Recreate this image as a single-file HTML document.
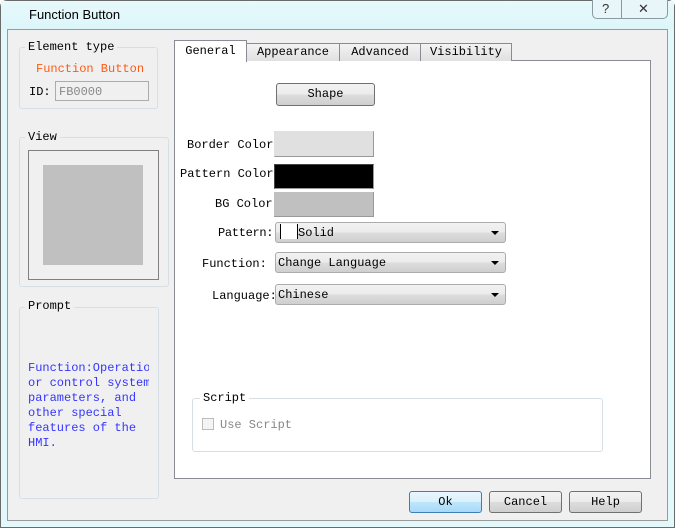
<!DOCTYPE html>
<html><head><style>
*{box-sizing:border-box;margin:0;padding:0}
body{width:675px;height:528px;background:#fff;font-family:"Liberation Mono",monospace;font-size:12px;position:relative;overflow:hidden}
.a{position:absolute}
.m{font-family:"Liberation Mono","Noto Sans CJK SC",monospace;font-size:12px;white-space:nowrap}
.btn{position:absolute;border:1px solid #707070;border-radius:3px;background:linear-gradient(#f2f2f2,#ebebeb 50%,#dddddd 51%,#cfcfcf);text-align:center;line-height:20px}
.grp{position:absolute;border:1px solid #d5dfe5;border-radius:3px}
.lg{position:absolute;background:#f0f0f0;padding:0 3px;top:-9px;left:6px;line-height:16px}
.cb{position:absolute;border:1px solid #acacac;border-radius:3px;background:linear-gradient(#f2f2f2,#ebebeb 50%,#dddddd 51%,#cfcfcf);height:21px;line-height:20px;padding-left:2px}
.ar{position:absolute;right:6px;top:8px;width:0;height:0;border-left:4px solid transparent;border-right:4px solid transparent;border-top:4px solid #000}
.tab{position:absolute;top:43px;height:18px;border:1px solid #898c95;border-bottom:none;background:linear-gradient(#f3f3f3,#e0e0e0);text-align:center;line-height:17px}
</style></head><body>
<div class="a" style="left:0;top:0;width:675px;height:528px;border:1px solid #6b6b6b;border-radius:7px 7px 0 0;background:#e2f8fb"></div>
<div class="a" style="left:1px;top:1px;width:673px;height:28px;background:linear-gradient(#e6f9fc,#ddf6fa)"></div>
<div class="a" style="left:29px;top:7px;font-family:'Liberation Sans',sans-serif;font-size:13px">Function Button</div>
<div class="a" style="left:592px;top:0;width:76px;height:19px;border:1px solid #8a9aa3;border-top:none;border-radius:0 0 5px 5px;background:#e8f6f9"></div>
<div class="a" style="left:621px;top:0;width:1px;height:19px;background:#8a9aa3"></div>
<div class="a" style="left:602px;top:1px;font-family:'Liberation Sans';font-size:13px;color:#333">?</div>
<div class="a" style="left:638px;top:1px;font-family:'Liberation Sans';font-size:13px;color:#333">✕</div>
<div class="a" style="left:7px;top:29px;width:661px;height:492px;background:#f0f0f0;border:1px solid #9a9a9a"></div>

<div class="grp" style="left:19px;top:47px;width:139px;height:62px"><div class="lg m" style="left:5px;top:-9px;color:#000">Element type</div></div>
<div class="a m" style="left:36px;top:62px;color:#ff5a12">Function Button</div>
<div class="a m" style="left:29px;top:85px">ID:</div>
<div class="a m" style="left:55px;top:81px;width:94px;height:20px;border:1px solid #acacac;color:#888;padding:3px 3px;background:#f0f0f0">FB0000</div>

<div class="grp" style="left:19px;top:137px;width:150px;height:150px"><div class="lg m" style="left:5px;color:#000">View</div></div>
<div class="a" style="left:28px;top:150px;width:131px;height:130px;border:1px solid #808080;background:#f0f0f0"></div>
<div class="a" style="left:43px;top:165px;width:100px;height:100px;background:#c0c0c0"></div>

<div class="grp" style="left:19px;top:307px;width:140px;height:192px"><div class="lg m" style="left:5px;top:-10px;color:#000">Prompt</div></div>
<div class="a m" style="left:28px;top:361px;width:121px;overflow:hidden;color:#3535ff;line-height:15px">Function:Operation<br>or control system<br>parameters, and<br>other special<br>features of the<br>HMI.</div>

<div class="a" style="left:174px;top:60px;width:477px;height:419px;background:#fff;border:1px solid #898c95"></div>
<div class="tab m" style="left:246px;width:94px">Appearance</div>
<div class="tab m" style="left:339px;width:82px">Advanced</div>
<div class="tab m" style="left:420px;width:92px">Visibility</div>
<div class="a m" style="left:174px;top:40px;width:73px;height:22px;background:#fff;border:1px solid #898c95;border-bottom:none;text-align:center;line-height:21px">General</div>

<div class="btn m" style="left:276px;top:83px;width:99px;height:23px">Shape</div>
<div class="a m" style="left:187px;top:138px">Border Color</div>
<div class="a" style="left:274px;top:131px;width:100px;height:26px;background:#e0e0e0;border:1px solid #e0e0e0;border-right-color:#999;border-bottom-color:#999"></div>
<div class="a m" style="left:180px;top:167px">Pattern Color</div>
<div class="a" style="left:274px;top:164px;width:100px;height:25px;background:#000;border:1px solid #444;border-right-color:#999;border-bottom-color:#999"></div>
<div class="a m" style="left:215px;top:197px">BG Color</div>
<div class="a" style="left:274px;top:192px;width:100px;height:25px;background:#c0c0c0;border-right:1px solid #999;border-bottom:1px solid #999"></div>

<div class="a m" style="left:218px;top:226px;letter-spacing:-0.3px">Pattern:</div>
<div class="cb m" style="left:275px;top:222px;width:231px"><span style="display:inline-block;width:18px;height:15px;background:#fff;border-left:1px solid #000;border-right:1px solid #000;vertical-align:-3px;margin-left:2px"></span>Solid<div class="ar"></div></div>
<div class="a m" style="left:202px;top:257px">Function:</div>
<div class="cb m" style="left:275px;top:252px;width:231px">Change Language<div class="ar"></div></div>
<div class="a m" style="left:212px;top:289px">Language:</div>
<div class="cb m" style="left:275px;top:284px;width:231px">Chinese<div class="ar"></div></div>

<div class="grp" style="left:192px;top:398px;width:411px;height:54px"><div class="lg m" style="background:#fff;left:7px;top:-9px;color:#000">Script</div></div>
<div class="a" style="left:202px;top:418px;width:12px;height:12px;border:1px solid #bbb;background:#f4f4f4"></div>
<div class="a m" style="left:220px;top:418px;color:#888">Use Script</div>

<div class="btn m" style="left:409px;top:491px;width:73px;height:22px;border-color:#3c7fb1;background:linear-gradient(#eaf6fd,#d9f0fc 50%,#bee6fd 51%,#a7d9f5)">Ok</div>
<div class="btn m" style="left:489px;top:491px;width:73px;height:22px">Cancel</div>
<div class="btn m" style="left:569px;top:491px;width:73px;height:22px">Help</div>
</body></html>
